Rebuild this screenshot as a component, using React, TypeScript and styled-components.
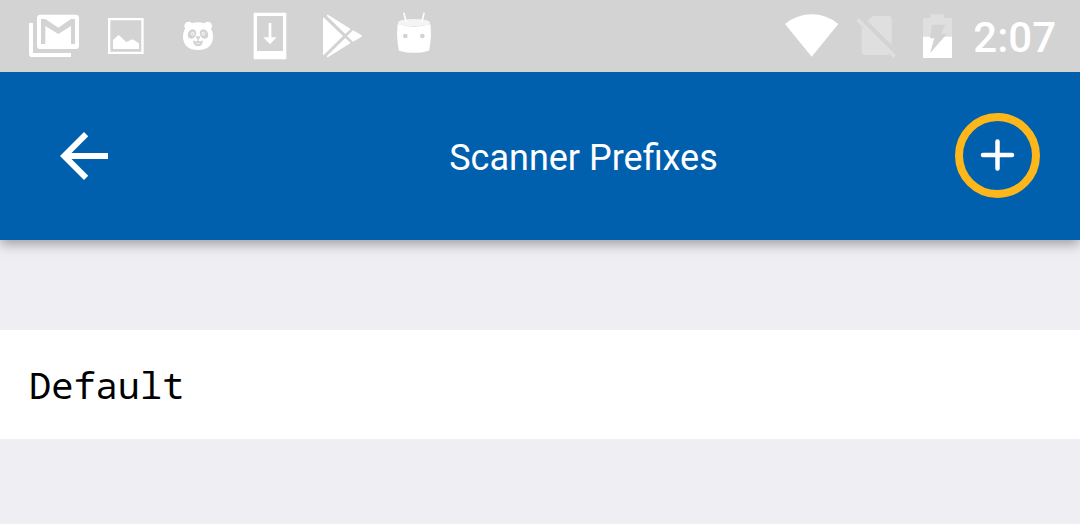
import React from "react";
import styled, { createGlobalStyle } from "styled-components";

const GlobalStyle = createGlobalStyle`
  *, *::before, *::after { box-sizing: border-box; }
  html { background: #efeef3; }
  body { margin: 0; font-family: Roboto, "Liberation Sans", sans-serif; }
`;

const BAR = "#d3d3d3";

const Screen = styled.div`
  display: flex;
  flex-direction: column;
  min-height: 100vh;
  background: #efeef3;
`;

const StatusBar = styled.div`
  position: relative;
  z-index: 2;
  display: flex;
  align-items: center;
  justify-content: space-between;
  height: 72px;
  padding: 0 24px 0 18px;
  background: ${BAR};
  color: #fff;
`;

const StatusGroup = styled.div`
  display: flex;
  align-items: center;
`;

const StatusIcon = styled.svg<{ $width?: number }>`
  display: block;
  flex: none;
  width: ${(p) => p.$width ?? 72}px;
  height: 72px;
  fill: #fff;
`;

const Clock = styled.time`
  margin-left: 10px;
  padding-top: 3px;
  font-size: 42px;
  line-height: 48px;
  font-weight: 500;
`;

const AppBar = styled.header`
  position: relative;
  z-index: 1;
  display: grid;
  grid-template-columns: 172px 1fr 85px;
  align-items: center;
  height: 168px;
  padding: 0 40px;
  background: #0060ae;
  color: #fff;
  box-shadow: 0 4px 12px rgba(0, 0, 0, 0.35);
`;

const IconButton = styled.button`
  display: flex;
  align-items: center;
  justify-content: center;
  padding: 0;
  border: 0;
  background: none;
  color: inherit;
  cursor: pointer;
`;

const BackButton = styled(IconButton)`
  width: 72px;
  height: 72px;
  margin-left: 8px;
`;

const AddButton = styled(IconButton)`
  width: 85px;
  height: 85px;
  margin-bottom: 2px;
  border: 8px solid #fdb71a;
  border-radius: 50%;
`;

const Title = styled.h1`
  margin: 0;
  padding-top: 3px;
  font-size: 36px;
  line-height: 42px;
  font-weight: 400;
  text-align: center;
`;

const PrefixList = styled.ul`
  margin: 90px 0 0;
  padding: 0;
  list-style: none;
`;

const PrefixItem = styled.li`
  padding: 34px 29px 33px;
  background: #fff;
  color: #000;
  font-family: "Droid Sans Mono", "Noto Sans Mono", "DejaVu Sans Mono", monospace;
  font-size: 37px;
  line-height: 42px;
`;

export default function App() {
  return (
    <Screen>
      <GlobalStyle />
      <StatusBar>
        <StatusGroup>
          <StatusIcon viewBox="-6 0 216 216" aria-label="Mail">
            <path d="M27 69h12v90h114v12H37q-10 0-10-10z" />
            <rect x="51" y="44" width="126" height="103" rx="10" />
            <path fill={BAR} d="M63 57h13l39 26 38-26h12v75h-12V78l-38 24-39-24v54H63z" />
          </StatusIcon>
          <StatusIcon viewBox="210 0 216 216" aria-label="Screenshot">
            <path fillRule="evenodd" d="M264 54h107v108H264zM271 61v94h93V61z" />
            <path d="M279 147v-27l17-15 23 21 19-8 19 12v17z" />
          </StatusIcon>
          <StatusIcon viewBox="6 0 216 216" aria-label="Panda">
            <circle cx="86" cy="78" r="13" />
            <circle cx="143" cy="78" r="13" />
            <path d="M114 67c28 0 45 18 45 43 0 26-18 40-45 40s-45-14-45-40c0-25 17-43 45-43z" />
            <g fill={BAR}>
              <ellipse cx="96" cy="102" rx="12" ry="15" transform="rotate(30 96 102)" />
              <ellipse cx="132" cy="102" rx="12" ry="15" transform="rotate(-30 132 102)" />
              <path d="M107 109h14q0 5-5 8v6q7 3 13-3-1 19-15 19T99 120q6 6 13 3v-6q-5-3-5-8z" />
            </g>
            <path d="M106 128q8 3 16 0-8 8-16 0z" />
            <circle cx="98" cy="101" r="4" fill="none" stroke="#fff" strokeWidth="3" />
            <circle cx="130" cy="101" r="4" fill="none" stroke="#fff" strokeWidth="3" />
          </StatusIcon>
          <StatusIcon viewBox="222 0 216 216" aria-label="Download">
            <path
              fillRule="evenodd"
              d="M284 38h92q3 0 3 3v134q0 3-3 3h-92q-3 0-3-3V41q0-3 3-3zM291 48v105h78V48z"
            />
            <path d="M326 69h8v43h16l-20 21-20-21h16z" />
          </StatusIcon>
          <StatusIcon viewBox="18 0 216 216" aria-label="Play Store">
            <path d="M69 54q0-3 3-1l57 55-57 56q-3 2-3-1z" />
            <path d="M80 47q1-4 5-2l67 42-16 15z" />
            <path d="M80 169q1 4 5 2l67-42-16-15z" />
            <path d="M159 91l25 14q4 3 0 6l-25 14-18-17z" />
          </StatusIcon>
          <StatusIcon viewBox="234 0 216 216" aria-label="Android">
            <path d="M293 72q49 16 98 0 5 40-4 80-45 13-90 0-9-40-4-80z" />
            <ellipse cx="342" cy="68" rx="48" ry="11" opacity=".75" />
            <path d="M312 40l6 24M372 40l-6 24" stroke="#fff" strokeWidth="5" strokeLinecap="round" />
            <circle cx="316" cy="108" r="7" fill={BAR} />
            <circle cx="367" cy="108" r="7" fill={BAR} />
          </StatusIcon>
        </StatusGroup>
        <StatusGroup>
          <StatusIcon $width={66} viewBox="21 0 198 216" aria-label="Wi-Fi">
            <path d="M45 72q36-29 80-29t80 29l-80 98z" />
          </StatusIcon>
          <StatusIcon $width={66} viewBox="219 0 198 216" aria-label="No SIM card">
            <g fill="#dfdfdf">
              <path d="M308 48h48q9 0 9 9v78l-73-72z" />
              <path d="M275 78l84 84-3 3h-72q-9 0-9-9z" />
              <path d="M266 54L378 166l-7 8L259 62z" />
            </g>
          </StatusIcon>
          <StatusIcon $width={54} viewBox="-3 0 162 216" aria-label="Battery charging">
            <path fill="#dfdfdf" d="M39 54h22V43h42v11h23v56H39z" />
            <path d="M39 110h87v64H39z" />
            <path fill={BAR} d="M66 74h40l-13 27h18l-51 59 13-45H60z" />
          </StatusIcon>
          <Clock>2:07</Clock>
        </StatusGroup>
      </StatusBar>
      <AppBar>
        <BackButton type="button" aria-label="Back">
          <svg width="72" height="72" viewBox="0 0 24 24" fill="currentColor">
            <path d="M20 11H7.83l5.59-5.59L12 4l-8 8 8 8 1.41-1.41L7.83 13H20z" />
          </svg>
        </BackButton>
        <Title>Scanner Prefixes</Title>
        <AddButton type="button" aria-label="Add prefix">
          <svg width="35" height="35" viewBox="0 0 70 70" fill="none" stroke="currentColor" strokeWidth="9" strokeLinecap="round">
            <path d="M35 7v54M6 34h58" />
          </svg>
        </AddButton>
      </AppBar>
      <main>
        <PrefixList>
          <PrefixItem>Default</PrefixItem>
        </PrefixList>
      </main>
    </Screen>
  );
}
